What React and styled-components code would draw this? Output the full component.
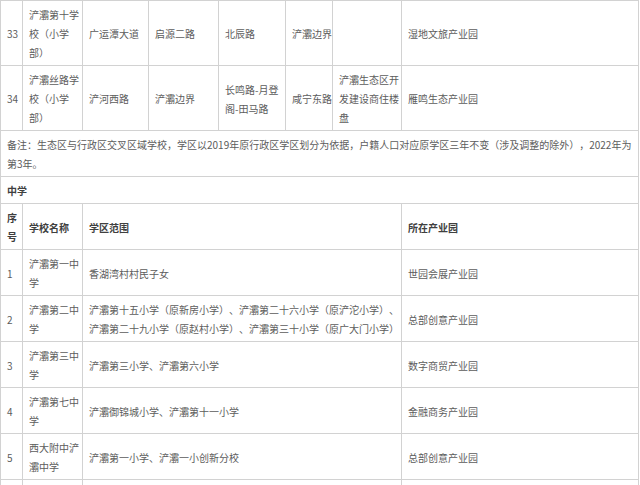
import React from "react";
import styled, { createGlobalStyle } from "styled-components";

const GlobalStyle = createGlobalStyle`
  html, body { margin: 0; padding: 0; background: #ffffff; overflow: hidden; }
  body { font-family: "Noto Sans CJK SC", "Noto Sans", sans-serif; }
`;

const Page = styled.div`
  width: 640px;
  height: 485px;
  overflow: hidden;
  background: #ffffff;
`;

const Table = styled.table`
  border-collapse: collapse;
  table-layout: fixed;
  width: 638px;
  font-family: "Noto Sans CJK SC", "Noto Sans", sans-serif;
  font-size: 10px;
  line-height: 19px;
  color: #5c5c5c;
  text-spacing-trim: space-all;
  font-feature-settings: "palt" 0, "halt" 0;
`;

const Cell = styled.td`
  border: 1px solid #d2d2d2;
  padding: 4px 2px 3px 6px;
  vertical-align: middle;
  text-align: left;
  white-space: ${(p) => (p.$nowrap ? "nowrap" : "normal")};
  font-weight: ${(p) => (p.$bold ? 700 : 400)};
  color: ${(p) => (p.$bold ? "#404040" : "#5c5c5c")};
  height: ${(p) => (p.$h ? `${p.$h}px` : "auto")};
`;

const widths = [22, 60, 66, 70, 67, 47, 69, 237];

const topRows = [
  ["33", "浐灞第十学校（小学部）", "广运潭大道", "启源二路", "北辰路", "浐灞边界", "", "湿地文旅产业园"],
  ["34", "浐灞丝路学校（小学部）", "浐河西路", "浐灞边界", "长鸣路-月登阁-田马路", "咸宁东路", "浐灞生态区开发建设商住楼盘", "雁鸣生态产业园"],
];

const middleRows = [
  ["1", "浐灞第一中学", ["香湖湾村村民子女"], "世园会展产业园"],
  [
    "2",
    "浐灞第二中学",
    [
      "浐灞第十五小学（原新房小学）、浐灞第二十六小学（原浐沱小学）、",
      "浐灞第二十九小学（原赵村小学）、浐灞第三十小学（原广大门小学）",
    ],
    "总部创意产业园",
  ],
  ["3", "浐灞第三中学", ["浐灞第三小学、浐灞第六小学"], "数字商贸产业园"],
  ["4", "浐灞第七中学", ["浐灞御锦城小学、浐灞第十一小学"], "金融商务产业园"],
  ["5", "西大附中浐灞中学", ["浐灞第一小学、浐灞一小创新分校"], "总部创意产业园"],
];

const Lines = ({ lines }) =>
  lines.map((l, i) => (
    <React.Fragment key={i}>
      {i > 0 && <br />}
      {l}
    </React.Fragment>
  ));

export default function App() {
  return (
    <Page>
      <GlobalStyle />
      <Table>
        <colgroup>
          {widths.map((w, i) => (
            <col key={i} style={{ width: w }} />
          ))}
        </colgroup>
        <tbody>
          {topRows.map((r) => (
            <tr key={r[0]}>
              {r.map((c, i) => (
                <Cell key={i} $nowrap={i === 5}>
                  {c}
                </Cell>
              ))}
            </tr>
          ))}
          <tr>
            <Cell colSpan={8} $nowrap>
              <Lines
                lines={[
                  "备注：生态区与行政区交叉区域学校，学区以2019年原行政区学区划分为依据，户籍人口对应原学区三年不变（涉及调整的除外），2022年为",
                  "第3年。",
                ]}
              />
            </Cell>
          </tr>
          <tr>
            <Cell colSpan={8} $bold>
              中学
            </Cell>
          </tr>
          <tr>
            <Cell $bold>序号</Cell>
            <Cell $bold>学校名称</Cell>
            <Cell colSpan={5} $bold>
              学区范围
            </Cell>
            <Cell $bold>所在产业园</Cell>
          </tr>
          {middleRows.map((r) => (
            <tr key={r[0]}>
              <Cell>{r[0]}</Cell>
              <Cell>{r[1]}</Cell>
              <Cell colSpan={5} $nowrap>
                <Lines lines={r[2]} />
              </Cell>
              <Cell>{r[3]}</Cell>
            </tr>
          ))}
          <tr>
            <Cell $h={40}></Cell>
            <Cell></Cell>
            <Cell colSpan={5}></Cell>
            <Cell></Cell>
          </tr>
        </tbody>
      </Table>
    </Page>
  );
}
